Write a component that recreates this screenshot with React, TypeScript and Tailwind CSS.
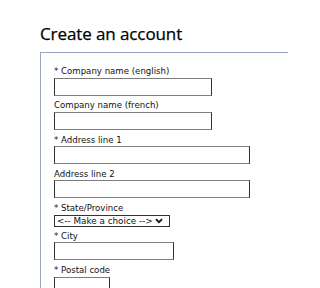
import React from "react";

function Field({ label, width }: { label: string; width: string }) {
  return (
    <div className="mb-[4.8px]">
      <div className="text-[8.6px] leading-[10px] mb-[1.5px] text-[#111] whitespace-nowrap">{label}</div>
      <div className={`h-[18px] ${width} border border-y-[#7d7d7d] border-x-[#333] bg-white`} />
    </div>
  );
}

export default function App() {
  return (
    <div className="w-[288px] h-[288px] overflow-hidden bg-white pt-[24px] pl-[40px]" style={{ fontFamily: '"DejaVu Sans", sans-serif' }}>
      <h1 className="text-[17px] leading-[20px] text-black mb-[8px] whitespace-nowrap tracking-[-0.1px]" style={{ fontFamily: '"Open Sans", sans-serif', WebkitTextStroke: "0.25px #000" }}>
        Create an account
      </h1>
      <div className="w-[300px] h-[300px] border border-[#9aa3c2] pt-[13px] pl-[13px]">
        <Field label="* Company name (english)" width="w-[158px]" />
        <Field label="Company name (french)" width="w-[158px]" />
        <Field label="* Address line 1" width="w-[196px]" />
        <Field label="Address line 2" width="w-[196px]" />
        <div className="mb-[3.8px]">
          <div className="text-[8.6px] leading-[10px] mb-[1.5px] text-[#111] whitespace-nowrap">* State/Province</div>
          <div className="h-[12.5px] w-[116px] border border-[#333] flex items-center pl-[2px] pr-[6px] justify-between bg-white">
            <span className="text-[8.8px] leading-[10px] text-[#111] whitespace-nowrap">&lt;-- Make a choice --&gt;</span>
            <svg width="8" height="6" viewBox="0 0 8 6">
              <path d="M1 1.2 L4 4.2 L7 1.2" fill="none" stroke="#111" strokeWidth="1.8" />
            </svg>
          </div>
        </div>
        <Field label="* City" width="w-[120px]" />
        <Field label="* Postal code" width="w-[56px]" />
      </div>
    </div>
  );
}
